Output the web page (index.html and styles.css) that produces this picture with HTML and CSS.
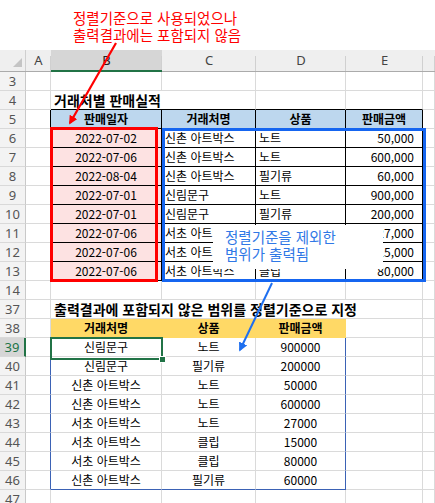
FILE: index.html
```html
<!DOCTYPE html>
<html lang="ko">
<head>
<meta charset="utf-8">
<title>정렬기준</title>
<link rel="stylesheet" href="styles.css">
</head>
<body>
<div class="page">
  <div class="note-top">정렬기준으로 사용되었으나<br>출력결과에는 포함되지 않음</div>
  <div class="sheet">
    <div class="row colhead">
      <div class="corner"><span class="tri"></span></div>
      <div class="ch">A</div>
      <div class="ch sel">B</div>
      <div class="ch">C</div>
      <div class="ch">D</div>
      <div class="ch">E</div>
      <div class="ch"></div>
    </div>

    <div class="row"><div class="rh">3</div><div></div><div></div><div></div><div></div><div></div><div></div></div>
    <div class="row"><div class="rh">4</div><div></div><div class="title span2 bk-b">거래처별 판매실적</div><div class="bk-b"></div><div class="bk-b"></div><div></div></div>
    <div class="row"><div class="rh">5</div><div class="bk-r"></div><div class="hblue">판매일자</div><div class="hblue">거래처명</div><div class="hblue">상품</div><div class="hblue">판매금액</div><div></div></div>

    <div class="row"><div class="rh">6</div><div class="bk-r"></div><div class="pink">2022-07-02</div><div class="bk l">신촌 아트박스</div><div class="bk l">노트</div><div class="bk r">50,000</div><div></div></div>
    <div class="row"><div class="rh">7</div><div class="bk-r"></div><div class="pink">2022-07-06</div><div class="bk l">신촌 아트박스</div><div class="bk l">노트</div><div class="bk r">600,000</div><div></div></div>
    <div class="row"><div class="rh">8</div><div class="bk-r"></div><div class="pink">2022-08-04</div><div class="bk l">신촌 아트박스</div><div class="bk l">필기류</div><div class="bk r">60,000</div><div></div></div>
    <div class="row"><div class="rh">9</div><div class="bk-r"></div><div class="pink">2022-07-01</div><div class="bk l">신림문구</div><div class="bk l">노트</div><div class="bk r">900,000</div><div></div></div>
    <div class="row"><div class="rh">10</div><div class="bk-r"></div><div class="pink">2022-07-01</div><div class="bk l">신림문구</div><div class="bk l">필기류</div><div class="bk r">200,000</div><div></div></div>
    <div class="row"><div class="rh">11</div><div class="bk-r"></div><div class="pink">2022-07-06</div><div class="bk l">서초 아트박스</div><div class="bk l">노트</div><div class="bk r">27,000</div><div></div></div>
    <div class="row"><div class="rh">12</div><div class="bk-r"></div><div class="pink">2022-07-06</div><div class="bk l">서초 아트박스</div><div class="bk l">클립</div><div class="bk r">15,000</div><div></div></div>
    <div class="row"><div class="rh">13</div><div class="bk-r"></div><div class="pink">2022-07-06</div><div class="bk l">서초 아트박스</div><div class="bk l">클립</div><div class="bk r">80,000</div><div></div></div>
    <div class="row"><div class="rh">14</div><div></div><div></div><div></div><div></div><div></div><div></div></div>

    <div class="row"><div class="rh">37</div><div></div><div class="title span4">출력결과에 포함되지 않은 범위를 정렬기준으로 지정</div><div></div></div>
    <div class="row"><div class="rh">38</div><div></div><div class="hyel">거래처명</div><div class="hyel">상품</div><div class="hyel">판매금액</div><div></div><div></div></div>

    <div class="row"><div class="rh rsel">39</div><div class="bl-r"></div><div class="c">신림문구</div><div class="c">노트</div><div class="c bl-r">900000</div><div></div><div></div></div>
    <div class="row"><div class="rh">40</div><div class="bl-r"></div><div class="c">신림문구</div><div class="c">필기류</div><div class="c bl-r">200000</div><div></div><div></div></div>
    <div class="row"><div class="rh">41</div><div class="bl-r"></div><div class="c">신촌 아트박스</div><div class="c">노트</div><div class="c bl-r">50000</div><div></div><div></div></div>
    <div class="row"><div class="rh">42</div><div class="bl-r"></div><div class="c">신촌 아트박스</div><div class="c">노트</div><div class="c bl-r">600000</div><div></div><div></div></div>
    <div class="row"><div class="rh">43</div><div class="bl-r"></div><div class="c">서초 아트박스</div><div class="c">노트</div><div class="c bl-r">27000</div><div></div><div></div></div>
    <div class="row"><div class="rh">44</div><div class="bl-r"></div><div class="c">서초 아트박스</div><div class="c">클립</div><div class="c bl-r">15000</div><div></div><div></div></div>
    <div class="row"><div class="rh">45</div><div class="bl-r"></div><div class="c">서초 아트박스</div><div class="c">클립</div><div class="c bl-r">80000</div><div></div><div></div></div>
    <div class="row"><div class="rh">46</div><div class="bl-r"></div><div class="c bl-b">신촌 아트박스</div><div class="c bl-b">필기류</div><div class="c bl-r bl-b">60000</div><div></div><div></div></div>
    <div class="row"><div class="rh">47</div><div></div><div></div><div></div><div></div><div></div><div></div></div>
  </div>

  <div class="frame-red"></div>
  <div class="frame-blue"></div>
  <div class="selection"><span class="handle"></span></div>
  <div class="note-box">정렬기준을 제외한<br>범위가 출력됨</div>

  <svg class="arrows" width="435" height="503" viewBox="0 0 435 503">
    <defs>
      <marker id="headRed" viewBox="0 0 10 10" refX="8" refY="5" markerWidth="4" markerHeight="4" orient="auto">
        <path d="M0,0 L10,5 L0,10 z" fill="#ff0000"/>
      </marker>
      <marker id="headBlue" viewBox="0 0 10 10" refX="8" refY="5" markerWidth="4.5" markerHeight="4.5" orient="auto">
        <path d="M0,0 L10,5 L0,10 z" fill="#1e6ff0"/>
      </marker>
    </defs>
    <line x1="116" y1="43" x2="70" y2="123" stroke="#ff0000" stroke-width="2.2" marker-end="url(#headRed)"/>
    <line x1="272" y1="283" x2="240" y2="350" stroke="#1e6ff0" stroke-width="2" marker-end="url(#headBlue)"/>
  </svg>
</div>
</body>
</html>
```

FILE: styles.css
```css
* { box-sizing: border-box; }

body {
  margin: 0;
  background: #ffffff;
  font-family: "Noto Sans CJK KR", "Noto Sans", sans-serif;
  overflow: hidden;
}

.page {
  position: relative;
  width: 435px;
  height: 503px;
  overflow: hidden;
}

.note-top {
  height: 50px;
  padding: 9px 0 0 73px;
  color: #ff0000;
  font-size: 14.5px;
  line-height: 17px;
}

.sheet {
  font-size: 12px;
  color: #000;
}

.row {
  display: grid;
  grid-template-columns: 26px 25px 111px 94px 90px 77px 1fr;
  height: 19px;
}

.row > div {
  border-right: 1px solid #dadada;
  border-bottom: 1px solid #dadada;
  white-space: nowrap;
  line-height: 18px;
  overflow: hidden;
}

/* column header band */
.row.colhead { height: 22px; }
.row.colhead > div {
  background: #efefef linear-gradient(#d0d0d0, #d0d0d0) right 6px / 1px 16px no-repeat;
  border-right: 0;
  border-bottom: 1px solid #ababab;
  font-family: "Noto Sans", sans-serif;
  font-size: 13px;
  color: #444;
  text-align: center;
  line-height: 21px;
}
.row.colhead > .corner {
  position: relative;
  background: #efefef linear-gradient(#cfcfcf, #cfcfcf) right top / 1px 100% no-repeat;
}
.tri {
  position: absolute;
  right: 4px;
  bottom: 4px;
  width: 0;
  height: 0;
  border-left: 9px solid transparent;
  border-bottom: 9px solid #c4c4c4;
}
.row.colhead > .ch.sel {
  background-color: #d6d6d6;
  border-bottom: 2px solid #217346;
  color: #222;
}

/* row headers */
.row > .rh {
  background: #f3f3f3;
  color: #555;
  font-family: "Noto Sans", sans-serif;
  font-size: 13px;
  text-align: center;
  border-right-color: #c9c9c9;
  border-bottom-color: #d9d9d9;
}
.row > .rh.rsel {
  background: #d6d6d6;
  border-right: 2px solid #217346;
  color: #217346;
}

/* text alignment */
.row > .c { text-align: center; }
.row > .l { padding-left: 3px; }
.row > .r { text-align: right; padding-right: 8px; }

.row > .title {
  font-weight: 700;
  font-size: 14px;
  padding-left: 3px;
  overflow: visible;
}
.span2 { grid-column: span 2; }
.span4 { grid-column: span 4; }

/* table 1 */
.row > .bk-r { border-right-color: #000; }
.row > .bk-b { border-bottom-color: #000; }
.row > .bk { border-right-color: #000; border-bottom-color: #000; }
.row > .hblue {
  background: #bdd7ee;
  border-right-color: #000;
  border-bottom-color: #000;
  font-weight: 700;
  text-align: center;
}
.row > .pink {
  background: #fde2e2;
  border-right-color: #000;
  border-bottom-color: #000;
  text-align: center;
}

/* table 2 */
.row > .hyel {
  background: #ffd966;
  border-right-color: transparent;
  border-bottom-color: transparent;
  font-weight: 700;
  text-align: center;
}
.row > .bl-r { border-right-color: #3b62b5; }
.row > .bl-b { border-bottom-color: #3b62b5; }

/* overlays */
.frame-red {
  position: absolute;
  left: 50px;
  top: 127px;
  width: 108px;
  height: 155px;
  border: 3px solid #ff0000;
}
.frame-blue {
  position: absolute;
  left: 162px;
  top: 128px;
  width: 264px;
  height: 154px;
  border: 3px solid #1565f0;
}
.selection {
  position: absolute;
  left: 50px;
  top: 337px;
  width: 113px;
  height: 23px;
  border: 2px solid #217346;
}
.handle {
  position: absolute;
  right: -5px;
  bottom: -5px;
  width: 7px;
  height: 7px;
  background: #217346;
  border: 1px solid #fff;
}
.note-box {
  position: absolute;
  left: 213px;
  top: 225px;
  width: 170px;
  height: 44px;
  background: #fff;
  color: #2f78e6;
  font-size: 14.5px;
  line-height: 17px;
  padding: 3px 0 0 12px;
}
.arrows {
  position: absolute;
  left: 0;
  top: 0;
  pointer-events: none;
}
```
